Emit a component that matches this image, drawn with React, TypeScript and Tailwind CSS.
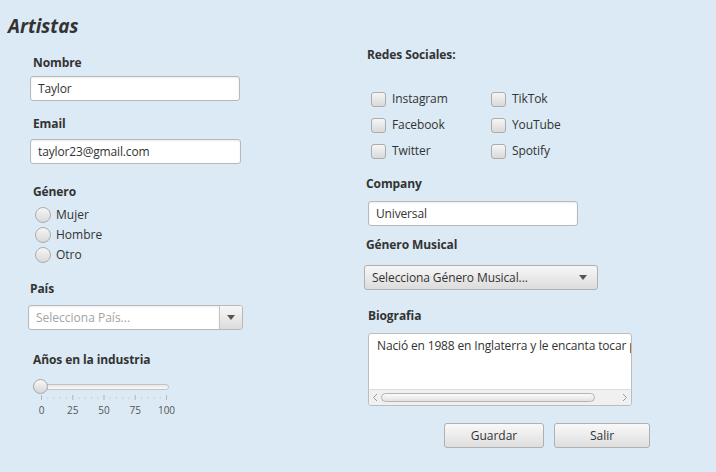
import React from "react";

const font = { fontFamily: '"Open Sans", "Noto Sans", Arial, sans-serif' };

function Label({ children, className = "" }: { children: React.ReactNode; className?: string }) {
  return <div className={`h-[16px] leading-[16px] text-[12px] font-bold text-[#333333] tracking-[-0.1px] ${className}`}>{children}</div>;
}

function TextInput({ value, className = "" }: { value: string; className?: string }) {
  return (
    <div
      className={`h-[25px] bg-white border border-[#b8b8b8] rounded-[3px] shadow-[inset_0_1px_2px_rgba(0,0,0,0.08)] flex items-center px-[7px] text-[12px] text-[#333333] tracking-[-0.15px] ${className}`}
    >
      {value}
    </div>
  );
}

function Radio({ label }: { label: string }) {
  return (
    <div className="h-[20px] flex items-center">
      <div className="w-[16px] h-[16px] rounded-full border border-[#acacac] bg-gradient-to-b from-[#f6f6f6] to-[#d9d9d9] ml-[2px]" />
      <span className="ml-[5px] text-[12px] text-[#333333]">{label}</span>
    </div>
  );
}

function Check({ label }: { label: string }) {
  return (
    <div className="flex items-center w-[120px]">
      <div className="w-[15px] h-[15px] rounded-[3px] border border-[#acacac] bg-gradient-to-b from-[#f6f6f6] to-[#d9d9d9]" />
      <span className="ml-[6px] text-[12px] text-[#333333] tracking-[-0.1px]">{label}</span>
    </div>
  );
}

function Arrow({ className = "" }: { className?: string }) {
  return (
    <svg width="8" height="5" viewBox="0 0 8 5" className={className}>
      <path d="M0 0 L8 0 L4 5 Z" fill="#555555" />
    </svg>
  );
}

function Slider() {
  const majors = [0, 25, 50, 75, 100];
  const ticks: number[] = [];
  for (let i = 0; i <= 20; i++) ticks.push(i);
  const x0 = 8;
  const w = 125;
  return (
    <div className="ml-[5px] w-[150px]">
      <div className="relative h-[16px] w-[136px]">
        <div className="absolute left-0 right-0 top-[5px] h-[6px] rounded-full border border-[#c2c2c2] bg-gradient-to-b from-[#e6e6e6] to-[#fafafa]" />
        <div className="absolute left-0 top-0 w-[15px] h-[15px] rounded-full border border-[#a6a6a6] bg-gradient-to-b from-[#f8f8f8] to-[#d6d6d6]" />
      </div>
      <svg width="150" height="8" className="block">
        {ticks.map((t) => {
          const x = x0 + (w * t) / 20;
          const major = t % 5 === 0;
          return (
            <line
              key={t}
              x1={x + 0.5}
              x2={x + 0.5}
              y1={major ? 0 : 2}
              y2={major ? 5 : 4}
              stroke={major ? "#b5b5b5" : "#cfcfcf"}
              strokeWidth="1"
            />
          );
        })}
      </svg>
      <div className="relative h-[14px] text-[10px] text-[#555555]">
        {majors.map((m, i) => (
          <span
            key={m}
            className="absolute top-0 leading-[14px] -translate-x-1/2"
            style={{ left: x0 + (w * i) / 4 + 0.5 }}
          >
            {m}
          </span>
        ))}
      </div>
    </div>
  );
}

function Button({ label, className = "" }: { label: string; className?: string }) {
  return (
    <div
      className={`h-[25px] rounded-[3px] border border-[#b0b0b0] bg-gradient-to-b from-[#f9f9f9] to-[#dedede] flex items-center justify-center text-[12px] text-[#333333] ${className}`}
    >
      {label}
    </div>
  );
}

export default function App() {
  return (
    <div className="w-[716px] h-[472px] bg-[#dbeaf4] overflow-hidden" style={font}>
      <div className="pl-[8px] pt-[14px] h-[41px] text-[19px] leading-[25px] font-bold italic text-[#333333]">Artistas</div>
      <div className="flex">
        {/* left column */}
        <div className="w-[364px] shrink-0 pl-[28px]">
          <Label className="mt-[14px] ml-[5px]">Nombre</Label>
          <TextInput value="Taylor" className="mt-[5px] ml-[2px] w-[210px]" />
          <Label className="mt-[15px] ml-[5px]">Email</Label>
          <TextInput value="taylor23@gmail.com" className="mt-[7px] ml-[2px] w-[211px]" />
          <Label className="mt-[20px] ml-[5px]">Género</Label>
          <div className="mt-[5px] ml-[5px]">
            <Radio label="Mujer" />
            <Radio label="Hombre" />
            <Radio label="Otro" />
          </div>
          <Label className="mt-[16px] ml-[2px]">País</Label>
          <div className="mt-[8px] w-[215px] h-[25px] flex bg-white border border-[#b8b8b8] rounded-[3px] overflow-hidden">
            <div className="flex-1 flex items-center px-[7px] text-[12px] text-[#a4a4a4] shadow-[inset_0_1px_2px_rgba(0,0,0,0.08)]">
              Selecciona País...
            </div>
            <div className="w-[23px] border-l border-[#c4c4c4] bg-gradient-to-b from-[#f7f7f7] to-[#dcdcdc] flex items-center justify-center">
              <Arrow />
            </div>
          </div>
          <Label className="mt-[22px] ml-[5px]">Años en la industria</Label>
          <div className="mt-[11px]">
            <Slider />
          </div>
        </div>
        {/* right column */}
        <div className="flex-1">
          <Label className="mt-[6px] ml-[3px]">Redes Sociales:</Label>
          <div className="mt-[23px] ml-[7px]">
            <div className="h-[26px] flex items-center">
              <Check label="Instagram" />
              <Check label="TikTok" />
            </div>
            <div className="h-[26px] flex items-center">
              <Check label="Facebook" />
              <Check label="YouTube" />
            </div>
            <div className="h-[26px] flex items-center">
              <Check label="Twitter" />
              <Check label="Spotify" />
            </div>
          </div>
          <Label className="mt-[12px] ml-[2px]">Company</Label>
          <TextInput value="Universal" className="mt-[9px] ml-[4px] w-[210px]" />
          <Label className="mt-[11px] ml-[2px]">Género Musical</Label>
          <div className="mt-[12px] w-[234px] h-[25px] rounded-[3px] border border-[#b0b0b0] bg-gradient-to-b from-[#f7f7f7] to-[#dcdcdc] flex items-center justify-between pl-[7px] pr-[10px] text-[12px] text-[#333333]">
            <span className="tracking-[-0.1px]">Selecciona Género Musical...</span>
            <Arrow />
          </div>
          <Label className="mt-[18px] ml-[4px]">Biografia</Label>
          <div className="mt-[9px] ml-[4px] w-[264px] h-[73px] bg-white border border-[#bdbdbd] rounded-[3px] flex flex-col overflow-hidden">
            <div className="flex-1 px-[8px] pt-[4px] text-[12px] leading-[16px] text-[#333333] whitespace-nowrap overflow-hidden tracking-[-0.15px]">
              Nació en 1988 en Inglaterra y le encanta tocar piano
            </div>
            <div className="h-[16px] bg-[#f0f0f0] border-t border-[#dcdcdc] flex items-center px-[3px]">
              <svg width="6" height="9" viewBox="0 0 6 9">
                <path d="M5 1 L1.5 4.5 L5 8" fill="none" stroke="#9a9a9a" strokeWidth="1" />
              </svg>
              <div className="ml-[3px] w-[214px] h-[9px] rounded-full border border-[#b4b4b4] bg-gradient-to-b from-[#fbfbfb] to-[#e2e2e2]" />
              <div className="flex-1" />
              <svg width="6" height="9" viewBox="0 0 6 9">
                <path d="M1 1 L4.5 4.5 L1 8" fill="none" stroke="#9a9a9a" strokeWidth="1" />
              </svg>
            </div>
          </div>
          <div className="mt-[17px] ml-[80px] flex gap-[10px]">
            <Button label="Guardar" className="w-[100px]" />
            <Button label="Salir" className="w-[96px]" />
          </div>
        </div>
      </div>
    </div>
  );
}
